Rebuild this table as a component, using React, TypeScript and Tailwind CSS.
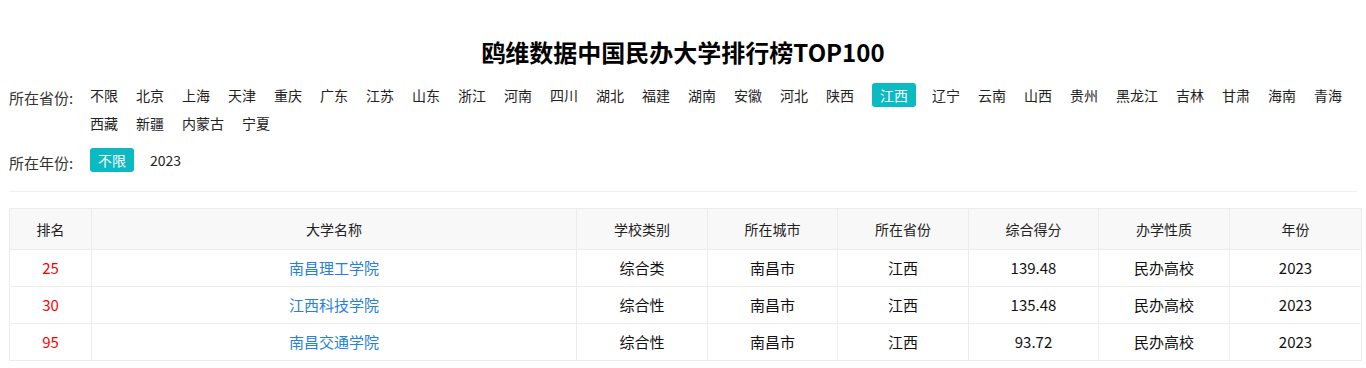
import React from "react";

const provinces = [
  "不限","北京","上海","天津","重庆","广东","江苏","山东","浙江","河南","四川","湖北","福建","湖南","安徽","河北","陕西","江西","辽宁","云南","山西","贵州","黑龙江","吉林","甘肃","海南","青海","西藏","新疆","内蒙古","宁夏",
];

const rows = [
  { rank: "25", name: "南昌理工学院", type: "综合类", city: "南昌市", prov: "江西", score: "139.48", nature: "民办高校", year: "2023" },
  { rank: "30", name: "江西科技学院", type: "综合性", city: "南昌市", prov: "江西", score: "135.48", nature: "民办高校", year: "2023" },
  { rank: "95", name: "南昌交通学院", type: "综合性", city: "南昌市", prov: "江西", score: "93.72", nature: "民办高校", year: "2023" },
];

const headers = ["排名", "大学名称", "学校类别", "所在城市", "所在省份", "综合得分", "办学性质", "年份"];
const widths = [82, 485, 131, 130, 131, 130, 131, 132];

function Item({ label, active }: { label: string; active?: boolean }) {
  if (active) {
    return (
      <span className="mr-4 flex h-[28px] items-center">
        <span className="flex h-[24px] items-center rounded-[3px] bg-[#0bbac3] px-2 text-white">{label}</span>
      </span>
    );
  }
  return <span className="mr-[18px] flex h-[28px] items-center text-[#222]">{label}</span>;
}

export default function App() {
  return (
    <div className="min-h-[368px] w-[1366px] bg-white font-['Noto_Sans_CJK_SC',sans-serif] text-[14px]">
      <h1 className="pt-[36px] text-center text-[24px] font-bold leading-[32px] text-black">
        鸥维数据中国民办大学排行榜TOP100
      </h1>

      <div className="mt-[13px] flex">
        <div className="w-[90px] shrink-0 pl-[9px] pt-[3px] text-[15px] leading-[28px] text-[#333]">所在省份:</div>
        <div className="flex flex-1 flex-wrap">
          {provinces.map((p) => (
            <Item key={p} label={p} active={p === "江西"} />
          ))}
        </div>
      </div>

      <div className="mt-[9px] flex">
        <div className="w-[90px] shrink-0 pl-[9px] pt-[3px] text-[15px] leading-[28px] text-[#333]">所在年份:</div>
        <div className="flex flex-1 flex-wrap">
          <Item label="不限" active />
          <Item label="2023" />
        </div>
      </div>

      <div className="mx-[9px] mt-[14px] border-t border-[#f0f0f0]" />

      <div className="mt-[16px] px-[9px]">
        <table className="w-[1352px] table-fixed border-collapse text-center text-[15px]">
          <colgroup>
            {widths.map((w, i) => (
              <col key={i} style={{ width: w }} />
            ))}
          </colgroup>
          <thead>
            <tr className="h-[41px] bg-[#f8f8f8]">
              {headers.map((h) => (
                <th key={h} className="border border-[#ececec] text-[14px] font-normal text-[#222]">
                  {h}
                </th>
              ))}
            </tr>
          </thead>
          <tbody>
            {rows.map((r) => (
              <tr key={r.rank} className="h-[37px]">
                <td className="border border-[#ececec] text-[#ff0000]">{r.rank}</td>
                <td className="border border-[#ececec] text-[#2680dc]">{r.name}</td>
                <td className="border border-[#ececec] text-[#111]">{r.type}</td>
                <td className="border border-[#ececec] text-[#111]">{r.city}</td>
                <td className="border border-[#ececec] text-[#111]">{r.prov}</td>
                <td className="border border-[#ececec] text-[#111]">{r.score}</td>
                <td className="border border-[#ececec] text-[#111]">{r.nature}</td>
                <td className="border border-[#ececec] text-[#111]">{r.year}</td>
              </tr>
            ))}
          </tbody>
        </table>
      </div>
    </div>
  );
}
